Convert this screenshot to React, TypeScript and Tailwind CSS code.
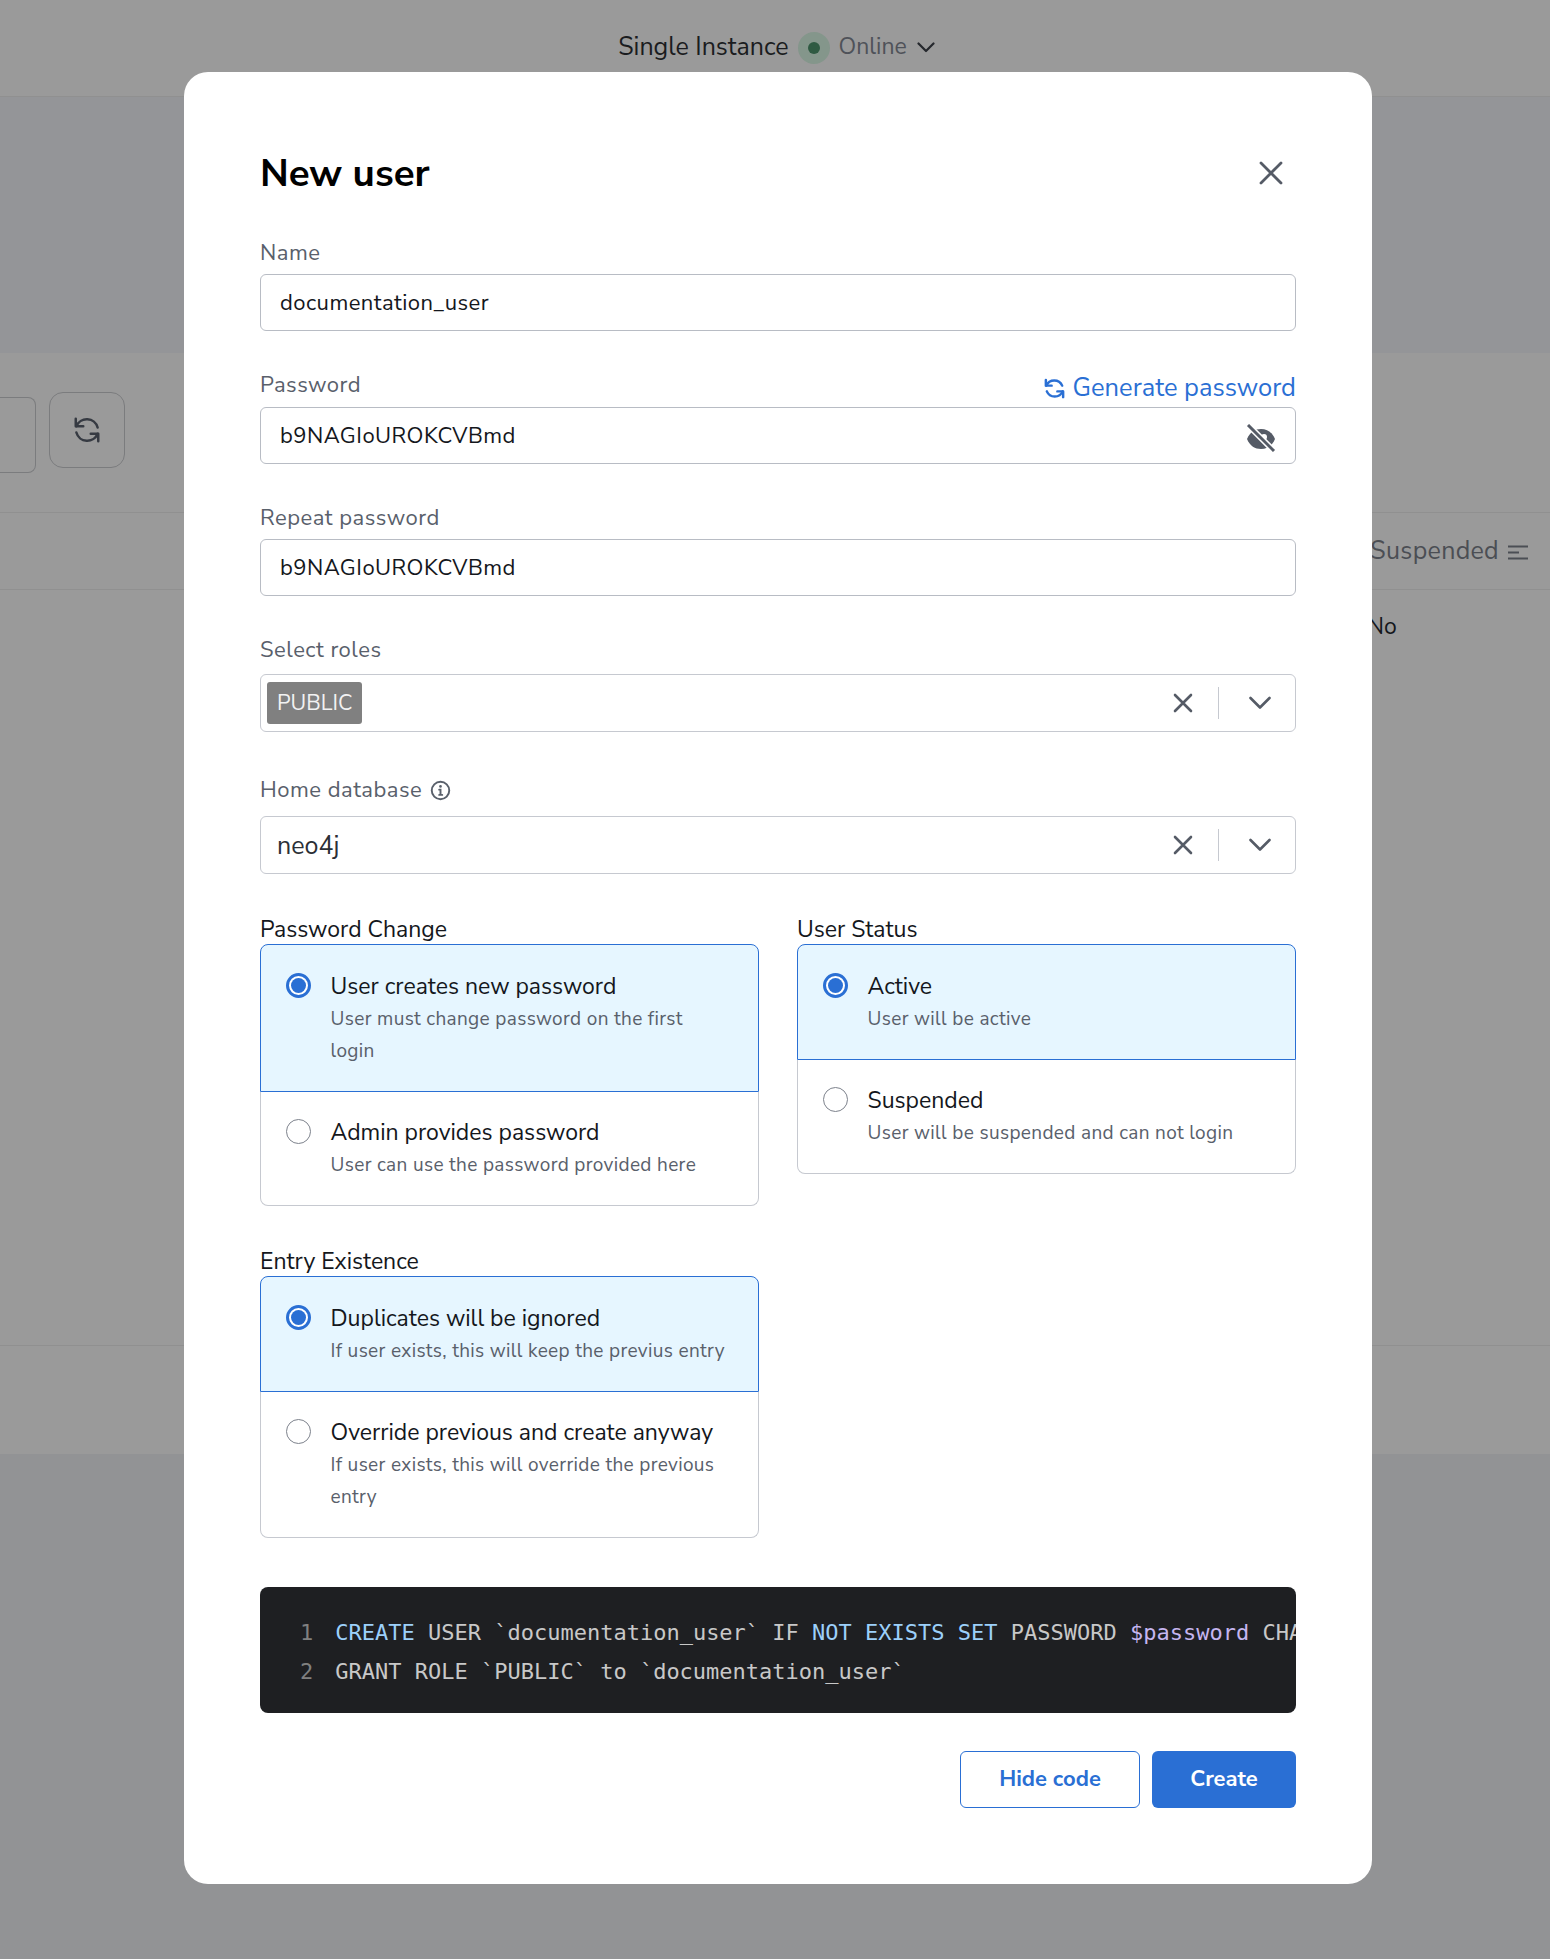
import React from 'react';

const font = 'font-["Nunito_Sans","Noto_Sans",sans-serif]';
const labelCls = 'text-[22px] tracking-[0.5px] text-[#59606b]';

const Field = ({ label, value, action, eye }: { label: string; value: string; action?: boolean; eye?: boolean }) => (
  <div>
    <div className="flex h-[22px] items-center justify-between pt-[2px]">
      <span className={labelCls}>{label}</span>
      {action && (
        <span className="flex translate-y-[3px] items-center gap-[7px] text-[25.5px] text-[#2a6fd4]">
          <svg width="23" height="23" viewBox="0 0 24 24" fill="none" stroke="currentColor" strokeWidth="2.6" strokeLinecap="round" strokeLinejoin="round">
            <path d="M3 3v6h6" />
            <path d="M3.5 9A9 9 0 0 1 20 9" />
            <path d="M21 21v-6h-6" />
            <path d="M20.5 15A9 9 0 0 1 4 15" />
          </svg>
          Generate password
        </span>
      )}
    </div>
    <div className="relative mt-[11px] flex h-[57px] items-center rounded-[6px] border border-[#b8bcc4] bg-white px-[19px] pt-[2px] text-[22px] tracking-[0.45px] text-[#14171c]">
      {value}
      {eye && (
        <svg className="absolute right-[18px] top-[16px]" width="32" height="28" viewBox="0 0 32 28" fill="none">
          <path d="M2 15c3-7 8-10 14-10s11 3 14 10c-3 7-8 10-14 10S5 22 2 15z" fill="#555b66" />
          <circle cx="19" cy="13" r="3" fill="white" />
          <path d="M3 1l26 26" stroke="white" strokeWidth="6" />
          <path d="M3 1l26 26" stroke="#555b66" strokeWidth="3" />
        </svg>
      )}
    </div>
  </div>
);

const SelectBox = ({ children, className }: { children: React.ReactNode; className: string }) => (
  <div className={'flex h-[58px] items-center rounded-[6px] border border-[#c6c9d0] bg-white pl-[6px] ' + className}>
    <div className="flex-1">{children}</div>
    <svg width="22" height="22" viewBox="0 0 22 22" fill="none" stroke="#555b66" strokeWidth="2.6" strokeLinecap="round">
      <path d="M3 3l16 16M19 3L3 19" />
    </svg>
    <div className="ml-[24px] h-[32px] w-px bg-[#c6c9d0]" />
    <svg className="ml-[30px] mr-[24px]" width="22" height="14" viewBox="0 0 22 14" fill="none" stroke="#555b66" strokeWidth="2.6" strokeLinecap="round" strokeLinejoin="round">
      <path d="M1.5 2L11 11.5 20.5 2" />
    </svg>
  </div>
);

const Option = ({ title, text, active, first, last }: { title: string; text: string; active?: boolean; first?: boolean; last?: boolean }) => (
  <div
    className={
      'flex gap-[19.5px] pl-[25px] pb-[24px] ' +
      (active ? 'border border-[#2a6fd4] bg-[#e6f6ff] pt-[28px] ' : 'border border-t-0 border-[#c6c9d0] bg-white pt-[27px] ') +
      (first ? 'rounded-t-[8px] ' : '') +
      (last ? 'rounded-b-[8px] ' : '')
    }
  >
    {active ? (
      <span className="flex h-[25px] w-[25px] shrink-0 items-center justify-center rounded-full border-[3px] border-[#2a6fd4] bg-white">
        <span className="h-[15px] w-[15px] rounded-full bg-[#2a6fd4]" />
      </span>
    ) : (
      <span className="h-[25px] w-[25px] shrink-0 rounded-full border border-[#7d828c] bg-white" />
    )}
    <div className="max-w-[398px]">
      <div className="text-[23px] leading-[28px] text-[#14171c]">{title}</div>
      <div className="mt-[2px] text-[19px] leading-[32px] tracking-[0.35px] text-[#59606b]">{text}</div>
    </div>
  </div>
);

const Group = ({ label, children }: { label: string; children: React.ReactNode }) => (
  <div>
    <div className="h-[29px] text-[23px] leading-[29px] text-[#14171c]">{label}</div>
    <div>{children}</div>
  </div>
);

const Backdrop = () => (
  <div className="bg-[#9a9a9a] text-[#14171c]">
    <div className="flex h-[97px] items-center justify-center border-b border-[#909090] pb-[1px] pl-[3px] text-[25px] text-[#1a1c20]">
      Single Instance
      <span className="ml-[9px] flex h-[32px] w-[32px] items-center justify-center rounded-full bg-[#84968b]">
        <span className="h-[12px] w-[12px] rounded-full bg-[#2f5a42]" />
      </span>
      <span className="ml-[9px] text-[23px] text-[#4f5259]">Online</span>
      <svg className="ml-[10px]" width="18" height="11" viewBox="0 0 18 11" fill="none" stroke="#25282d" strokeWidth="2.2" strokeLinecap="round" strokeLinejoin="round">
        <path d="M1.5 1.5L9 9l7.5-7.5" />
      </svg>
    </div>
    <div className="h-[256px] bg-[#949598]" />
    <div className="flex h-[159px] items-start pt-[39px]">
      <div className="mt-[5px] h-[76px] w-[36px] rounded-r-[8px] border border-l-0 border-[#7b7c7e]" />
      <div className="ml-[13px] flex h-[76px] w-[76px] items-center justify-center rounded-[14px] border border-[#7b7c7e]">
        <svg width="30" height="30" viewBox="0 0 24 24" fill="none" stroke="#363a42" strokeWidth="2" strokeLinecap="round" strokeLinejoin="round">
          <path d="M3 3v6h6" />
          <path d="M3.5 9A9 9 0 0 1 20.5 10" />
          <path d="M21 21v-6h-6" />
          <path d="M20.5 15A9 9 0 0 1 3.5 14" />
        </svg>
      </div>
    </div>
    <div className="flex h-[78px] items-center justify-end border-y border-[#909090] pr-[22px] pt-[2px] text-[25px] tracking-[0.3px] text-[#4b4e54]">
      Suspended
      <svg className="ml-[9px]" width="20" height="15" viewBox="0 0 20 15" fill="none" stroke="#4b4e54" strokeWidth="2">
        <path d="M0 1.5h20M0 7.5h11M0 13.5h20" />
      </svg>
    </div>
    <div className="h-[756px] border-b border-[#909090] pl-[1367px] pt-[20px] text-[23px]">No</div>
    <div className="h-[108px]" />
    <div className="h-[505px] bg-[#929395]" />
  </div>
);

export default function App() {
  return (
    <div className={`relative h-[1960px] w-full overflow-hidden ${font}`}>
      <Backdrop />
      <div className="absolute left-[184px] top-[72px] h-[1812px] w-[1188px] rounded-[24px] bg-white px-[76px] pt-[76px]">
        <div className="flex h-[51px] items-center justify-between">
          <h1 className="text-[38.5px] font-bold text-black">New user</h1>
          <svg className="mb-[2px] mr-[13px]" width="24" height="24" viewBox="0 0 24 24" fill="none" stroke="#555b66" strokeWidth="2.8" strokeLinecap="round">
            <path d="M2 2l20 20M22 2L2 22" />
          </svg>
        </div>
        <div className="mt-[42px] flex flex-col gap-[42.5px]">
          <Field label="Name" value="documentation_user" />
          <Field label="Password" value="b9NAGIoUROKCVBmd" action eye />
          <Field label="Repeat password" value="b9NAGIoUROKCVBmd" />
        </div>
        <div className="mt-[42px]">
          <div className={'flex h-[22px] items-center pt-[2px] ' + labelCls}>Select roles</div>
          <SelectBox className="mt-[14px]">
            <span className="inline-flex h-[42px] items-center rounded-[3px] bg-[#808080] px-[10px] text-[21.5px] text-[#f2f2f2]">PUBLIC</span>
          </SelectBox>
        </div>
        <div className="mt-[46px]">
          <div className={'flex h-[22px] items-center pt-[2px] ' + labelCls}>
            Home database
            <svg className="ml-[8px]" width="21" height="21" viewBox="0 0 24 24" fill="none" stroke="#59606b" strokeWidth="2.2" strokeLinecap="round">
              <circle cx="12" cy="12" r="10" />
              <path d="M10.5 11H12v6M10.5 17h3.5" />
              <path d="M12 7.2v.1" strokeWidth="3" />
            </svg>
          </div>
          <SelectBox className="mt-[16px]">
            <span className="ml-[10px] inline-block translate-y-[2px] text-[25px] text-[#2b2f36]">neo4j</span>
          </SelectBox>
        </div>
        <div className="mt-[41px] grid grid-cols-2 gap-x-[38px] gap-y-[41px]">
          <Group label="Password Change">
            <Option first active title="User creates new password" text="User must change password on the first login" />
            <Option last title="Admin provides password" text="User can use the password provided here" />
          </Group>
          <div className="row-span-2">
            <Group label="User Status">
              <Option first active title="Active" text="User will be active" />
              <Option last title="Suspended" text="User will be suspended and can not login" />
            </Group>
          </div>
          <Group label="Entry Existence">
            <Option first active title="Duplicates will be ignored" text="If user exists, this will keep the previus entry" />
            <Option last title="Override previous and create anyway" text="If user exists, this will override the previous entry" />
          </Group>
        </div>
        <div className="mt-[49px] h-[126px] overflow-hidden rounded-[8px] bg-[#1e1f22] pl-[40px] pt-[27px] font-['DejaVu_Sans_Mono',monospace] text-[22px] leading-[38.5px] whitespace-nowrap text-[#c8c8c8]">
          <div>
            <span className="mr-[22px] text-[#808080]">1</span>
            <span className="text-[#9cd0fa]">CREATE</span> USER `documentation_user` IF <span className="text-[#9cd0fa]">NOT EXISTS SET</span> PASSWORD <span className="text-[#c5b6f0]">$password</span> CHANGE
          </div>
          <div>
            <span className="mr-[22px] text-[#808080]">2</span>GRANT ROLE `PUBLIC` to `documentation_user`
          </div>
        </div>
        <div className="mt-[38px] flex justify-end gap-[12px]">
          <button className="h-[57px] w-[180px] rounded-[6px] border border-[#2a6fd4] bg-white text-[22px] font-bold text-[#2a6fd4]">Hide code</button>
          <button className="h-[57px] w-[144px] rounded-[6px] bg-[#2a6fd4] text-[22px] font-bold text-white">Create</button>
        </div>
      </div>
    </div>
  );
}
